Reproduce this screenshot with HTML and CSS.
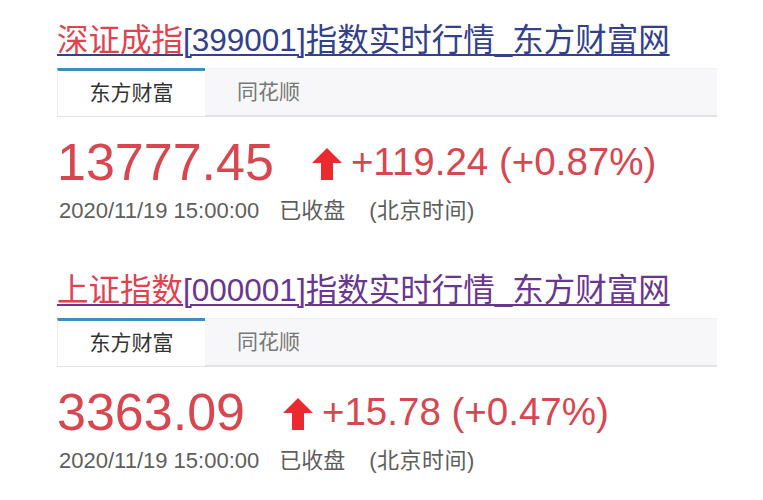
FILE: index.html
```html
<!DOCTYPE html>
<html lang="zh-CN">
<head>
<meta charset="utf-8">
<title>指数实时行情</title>
<link rel="stylesheet" href="styles.css">
</head>
<body>
<div class="page">
  <section class="quote">
    <h2 class="title"><a class="link link-blue" href="#"><span class="hl">深证成指</span>[399001]指数实时行情_东方财富网</a></h2>
    <div class="tabs">
      <div class="tab active">东方财富</div>
      <div class="tab">同花顺</div>
    </div>
    <div class="price-row">
      <span class="price">13777.45</span>
      <svg class="arrow" viewBox="0 0 30 32" width="30" height="32"><polygon points="15,0 30,15 21,15 21,32 9,32 9,15 0,15" fill="#ea2a2f"/></svg>
      <span class="change">+119.24 (+0.87%)</span>
    </div>
    <div class="meta"><span>2020/11/19 15:00:00</span><span class="gap">已收盘</span><span class="gap gap-wide">(北京时间)</span></div>
  </section>
  <section class="quote">
    <h2 class="title"><a class="link link-purple" href="#"><span class="hl">上证指数</span>[000001]指数实时行情_东方财富网</a></h2>
    <div class="tabs">
      <div class="tab active">东方财富</div>
      <div class="tab">同花顺</div>
    </div>
    <div class="price-row">
      <span class="price">3363.09</span>
      <svg class="arrow" viewBox="0 0 30 32" width="30" height="32"><polygon points="15,0 30,15 21,15 21,32 9,32 9,15 0,15" fill="#ea2a2f"/></svg>
      <span class="change">+15.78 (+0.47%)</span>
    </div>
    <div class="meta"><span>2020/11/19 15:00:00</span><span class="gap">已收盘</span><span class="gap gap-wide">(北京时间)</span></div>
  </section>
</div>
</body>
</html>
```
FILE: styles.css
```css
html, body {
  margin: 0;
  padding: 0;
  background: #ffffff;
}
body {
  font-family: "Liberation Sans", "Noto Sans CJK SC", sans-serif;
}
.page {
  padding: 22px 0 0 57px;
  width: 660px;
}
.quote {
  height: 250px;
}
.title {
  margin: 0;
  font-size: 31.5px;
  line-height: 36px;
  font-weight: normal;
  white-space: nowrap;
}
.link {
  text-decoration: underline;
  text-decoration-thickness: 2px;
  text-underline-offset: 3px;
}
.link-blue {
  color: #33408c;
}
.link-purple {
  color: #6a3790;
}
.hl {
  color: #e2424e;
}
.tabs {
  margin-top: 10px;
  height: 46px;
  display: flex;
  background: #f7f7f9;
  border-bottom: 2px solid #e3e3e6;
  border-top: 1px solid #f1f1f3;
}
.tab {
  font-size: 21px;
  line-height: 46px;
  color: #777;
  padding: 0 32px;
}
.tab.active {
  width: 148px;
  padding: 0;
  box-sizing: border-box;
  text-align: center;
  background: #ffffff;
  color: #333;
  border-top: 3px solid #3b8fc4;
  border-left: 1px solid #ececee;
  margin-top: -1px;
  line-height: 44px;
  height: 48px;
}
.price-row {
  margin-top: 15px;
  display: flex;
  align-items: center;
  height: 60px;
  color: #d8464f;
}
.price {
  font-size: 52px;
  line-height: 60px;
}
.arrow {
  margin-left: 38px;
  margin-top: 4px;
}
.change {
  margin-left: 9px;
  font-size: 38.5px;
  line-height: 60px;
}
.meta {
  margin-top: 6px;
  padding-left: 2px;
  font-size: 22px;
  line-height: 26px;
  color: #5e5e5e;
  white-space: nowrap;
}
.gap {
  margin-left: 20px;
}
.gap-wide {
  margin-left: 24px;
  letter-spacing: 0.5px;
}
```
